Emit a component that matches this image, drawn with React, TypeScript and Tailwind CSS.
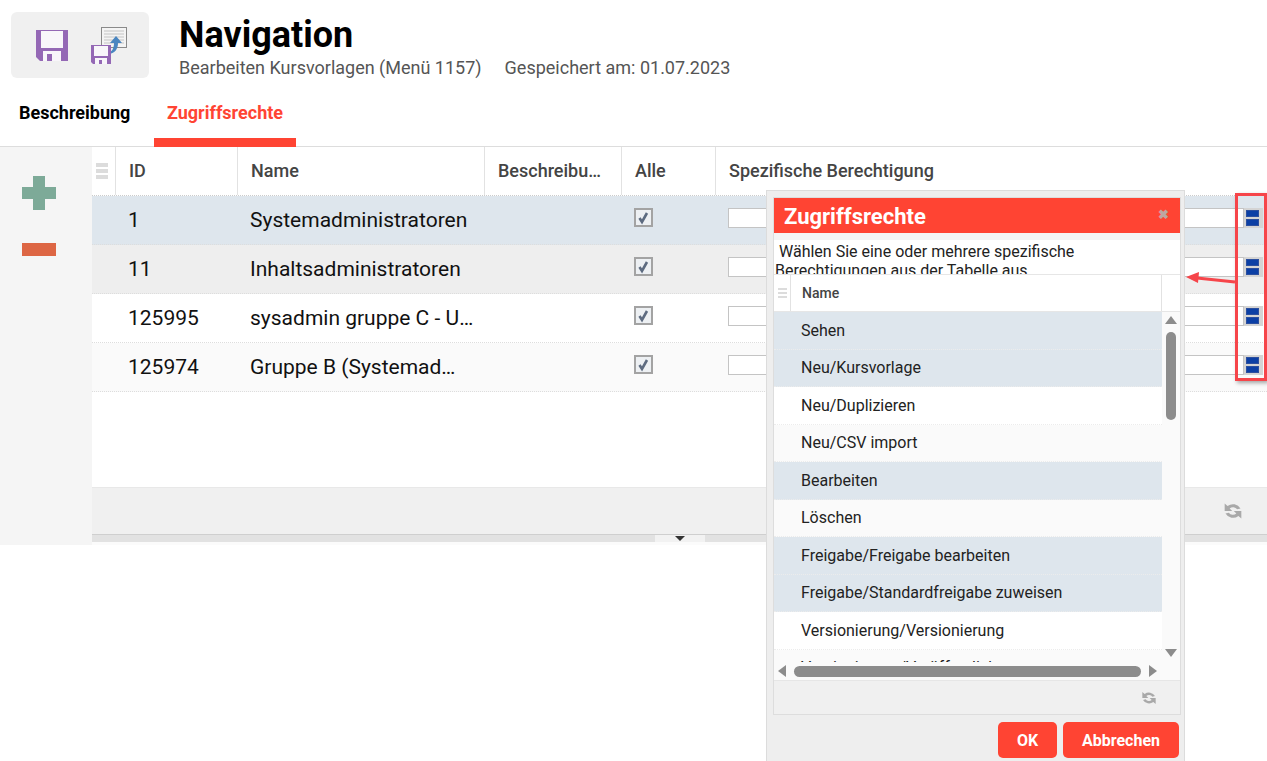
const rows = [
  { id: "1", name: "Systemadministratoren", bg: "bg-[#dee6ed]" },
  { id: "11", name: "Inhaltsadministratoren", bg: "bg-[#eeeeee]" },
  { id: "125995", name: "sysadmin gruppe C - U…", bg: "bg-white" },
  { id: "125974", name: "Gruppe B (Systemad…", bg: "bg-[#fafafa]" },
]

const rights = [
  { name: "Sehen", bg: "bg-[#dee6ed]" },
  { name: "Neu/Kursvorlage", bg: "bg-[#dee6ed]" },
  { name: "Neu/Duplizieren", bg: "bg-white" },
  { name: "Neu/CSV import", bg: "bg-[#fafafa]" },
  { name: "Bearbeiten", bg: "bg-[#dee6ed]" },
  { name: "Löschen", bg: "bg-[#fafafa]" },
  { name: "Freigabe/Freigabe bearbeiten", bg: "bg-[#dee6ed]" },
  { name: "Freigabe/Standardfreigabe zuweisen", bg: "bg-[#dee6ed]" },
  { name: "Versionierung/Versionierung", bg: "bg-white" },
  { name: "Versionierung/Veröffentlichen", bg: "bg-[#fafafa]" },
]

function Floppy({ className }: { className: string }) {
  return (
    <svg viewBox="0 0 32 31" className={className}>
      <path d="M0 0h32v31H4l-4-4z" fill="#9468b5" />
      <rect x="5" y="1" width="22" height="17" fill="#f8f6fa" />
      <path d="M7 31V21h18v10H16v-7h-5v7z" fill="#f8f6fa" />
    </svg>
  )
}

function Refresh({ className }: { className: string }) {
  return (
    <svg viewBox="0 0 24 24" fill="#a9a9a9" className={className}>
      <path d="M2 3v9h9L8 9a6 6 0 0 1 9 1l4-1A10.500 10.500 0 0 0 5.500 6z" />
      <path d="M22 21v-9h-9l3 3a6 6 0 0 1-9-1l-4 1a10.500 10.500 0 0 0 15.500 3z" />
    </svg>
  )
}

function Grip() {
  return (
    <div className="flex flex-col gap-[2px]">
      <div className="h-[4px] w-[12px] bg-[#dcdcdc]" />
      <div className="h-[4px] w-[12px] bg-[#dcdcdc]" />
      <div className="h-[4px] w-[12px] bg-[#dcdcdc]" />
    </div>
  )
}

function PickerButton() {
  return (
    <div className="flex h-[20px] w-[19px] flex-col items-start justify-center gap-[2px] bg-[#d4d4d4] pl-[2px]">
      <div className="h-[7px] w-[13px] border border-[#2c4f9e] bg-[#0b3fa5]" />
      <div className="h-[7px] w-[13px] border border-[#2c4f9e] bg-[#0b3fa5]" />
    </div>
  )
}

function Check() {
  return (
    <svg viewBox="0 0 19 19" className="h-[19px] w-[19px]">
      <rect x="1" y="1" width="17" height="17" fill="#edf0f3" stroke="#a3a3a3" strokeWidth="2" />
      <path d="M5.500 10l2.500 4 5-9" fill="none" stroke="#5d6b80" strokeWidth="2.600" />
    </svg>
  )
}

export default function App() {
  return (
    <div className="relative h-[761px] w-[1267px] overflow-hidden bg-white font-['Roboto',sans-serif]">
      {/* Header */}
      <div className="flex h-[92px] pl-[11px] pt-[12px]">
        <div className="flex h-[66px] w-[138px] items-center rounded-md bg-[#f0f0f0] pl-[25px]">
          <Floppy className="h-[31px] w-[32px]" />
          <svg viewBox="0 0 36 37" className="ml-[23px] h-[37px] w-[36px]">
            <rect x="10.500" y="0.500" width="25" height="20" fill="#f4f4f4" stroke="#8a8a8a" />
            <path d="M13 4h20M13 7h20M13 10h20M13 13h20M13 16h20" stroke="#c4c4c4" strokeWidth="1" />
            <path d="M18 25c3 0 5-4 5-9h-4l6-7 6 7h-4c0 6-3 10-9 11z" fill="#4a86c0" />
            <path d="M0 18h20v19H2l-2-2z" fill="#9468b5" />
            <rect x="3" y="19" width="14" height="10" fill="#f8f6fa" />
            <path d="M4 37v-6h12v6h-5v-4H8v4z" fill="#f8f6fa" />
          </svg>
        </div>
        <div className="ml-[30px]">
          <div className="mt-[3px] text-[36px] font-bold leading-[40px] text-black">Navigation</div>
          <div className="mt-[2px] flex text-[18px] leading-[21px] text-[#555]">
            <span>Bearbeiten Kursvorlagen (Menü 1157)</span>
            <span className="ml-[23px]">Gespeichert am: 01.07.2023</span>
          </div>
        </div>
      </div>

      {/* Tabs */}
      <div className="flex h-[55px] border-b border-[#dddddd]">
        <div className="h-[55px] w-[154px] pl-[19px] pt-[10px] text-[18px] font-bold leading-[22px] text-black">
          Beschreibung
        </div>
        <div className="h-[55px] w-[142px] border-b-[9px] border-[#ff4433] pl-[13px] pt-[10px] text-[18px] font-bold leading-[22px] text-[#ff4433]">
          Zugriffsrechte
        </div>
      </div>

      {/* Main */}
      <div className="flex h-[398px]">
        <div className="flex w-[92px] flex-col items-center bg-[#f5f5f5] pr-[14px] pt-[29px]">
          <svg viewBox="0 0 34 34" className="h-[34px] w-[34px]">
            <path d="M11 0h12v11h11v12H23v11H11V23H0V11h11z" fill="#7daa98" />
          </svg>
          <div className="mt-[33px] h-[13px] w-[34px] bg-[#dd6644]" />
        </div>
        <div className="flex flex-1 flex-col">
          <div className="flex h-[49px] border-b border-dotted border-[#cccccc] text-[18px] font-medium text-[#444]">
            <div className="flex w-[24px] items-center justify-start border-r border-[#e2e2e2] pl-[4px]"><Grip /></div>
            <div className="flex w-[122px] items-center border-r border-[#e2e2e2] pb-[1px] pl-[13px]">ID</div>
            <div className="flex w-[247px] items-center border-r border-[#e2e2e2] pb-[1px] pl-[13px]">Name</div>
            <div className="flex w-[137px] items-center border-r border-[#e2e2e2] pb-[1px] pl-[13px]">
              <span className="truncate">Beschreibu…</span>
            </div>
            <div className="flex w-[94px] items-center border-r border-[#e2e2e2] pb-[1px] pl-[13px]">Alle</div>
            <div className="flex flex-1 items-center pb-[1px] pl-[13px]">Spezifische Berechtigung</div>
          </div>
          <div className="h-[291px]">
            {rows.map((r) => (
              <div key={r.id} className={`flex h-[49px] items-center border-b border-dotted border-[#dddddd] text-[21px] text-[#111] ${r.bg}`}>
                <div className="w-[36px]" />
                <div className="w-[122px] pt-[1px]">{r.id}</div>
                <div className="w-[384px] pt-[1px]">{r.name}</div>
                <div className="w-[94px] pb-[5px]"><Check /></div>
                <div className="flex flex-1 items-center pb-[4px] pr-[4px]">
                  <div className="h-[20px] flex-1 border border-[#c4c4c4] bg-white" />
                  <PickerButton />
                </div>
              </div>
            ))}
          </div>
          <div className="flex h-[47px] items-center justify-end border-t border-[#e8e8e8] bg-[#f0f0f0] pr-[24px]">
            <Refresh className="h-[20px] w-[20px]" />
          </div>
          <div className="flex h-[8px] justify-center border-t border-[#cfcfcf] bg-[#e2e2e2]">
            <div className="flex h-[7px] w-[50px] items-center justify-center bg-[#f2f2f2]">
              <div className="h-0 w-0 border-x-[5px] border-t-[5px] border-x-transparent border-t-[#333]" />
            </div>
          </div>
          <div className="h-[3px] bg-[#fbfbfb]" />
        </div>
      </div>

      {/* Dialog */}
      <div className="absolute left-[766px] top-[190px] h-[571px] w-[419px] border-x border-t border-[#dcdcdc] bg-[#eeeeee] pl-[6px] pr-[3px] pt-[6px]">
        <div className="border border-[#dddddd]">
          <div className="flex h-[35px] items-center justify-between bg-[#ff4433] pl-[10px] pr-[11px] pt-[1px] text-[22px] font-bold text-white">
            Zugriffsrechte
            <span className="pb-[3px] text-[13px] leading-none text-[#bda6a2]">✖</span>
          </div>
          <div className="h-[7px] bg-[#f4f4f4]" />
          <div className="h-[34px] overflow-hidden bg-white pl-[1px] pt-[2px] text-[16px] leading-[19px] text-[#222]">
            <span className="pl-[4px]">Wählen Sie eine oder mehrere spezifische</span>
            <br />
            Berechtigungen aus der Tabelle aus
          </div>
          <div className="flex h-[38px] border-y border-[#e6e6e6] bg-white text-[14px] font-medium text-[#444]">
            <div className="flex w-[17px] items-center justify-center border-r border-[#e2e2e2]">
              <div className="flex flex-col gap-[2px]">
                <div className="h-[2px] w-[9px] bg-[#dcdcdc]" />
                <div className="h-[2px] w-[9px] bg-[#dcdcdc]" />
                <div className="h-[2px] w-[9px] bg-[#dcdcdc]" />
              </div>
            </div>
            <div className="flex w-[371px] items-center border-r border-[#e2e2e2] pl-[11px]">Name</div>
          </div>
          <div className="flex h-[350px] bg-[#fafafa]">
            <div className="w-[388px] overflow-hidden">
              {rights.map((r) => (
                <div key={r.name} className={`flex h-[37.500px] items-center border-b border-dotted border-[#ececec] pl-[27px] pt-[1px] text-[16px] text-[#222] ${r.bg}`}>
                  {r.name}
                </div>
              ))}
            </div>
            <div className="flex w-[18px] flex-col items-center pt-[4px]">
              <div className="h-0 w-0 border-x-[6px] border-b-[8px] border-x-transparent border-b-[#8c8c8c]" />
              <div className="mt-[8px] h-[88px] w-[10px] rounded-full bg-[#8c8c8c]" />
              <div className="mt-[229px] h-0 w-0 border-x-[6px] border-t-[8px] border-x-transparent border-t-[#8c8c8c]" />
            </div>
          </div>
          <div className="flex h-[18px] items-center bg-[#fafafa] pl-[4px]">
            <div className="h-0 w-0 border-y-[6px] border-r-[8px] border-y-transparent border-r-[#8c8c8c]" />
            <div className="ml-[8px] h-[11px] w-[347px] rounded-full bg-[#8c8c8c]" />
            <div className="ml-[8px] h-0 w-0 border-y-[6px] border-l-[8px] border-y-transparent border-l-[#8c8c8c]" />
          </div>
          <div className="flex h-[34px] items-center justify-end border-t border-[#e6e6e6] bg-[#f0f0f0] pr-[23px]">
            <Refresh className="h-[16px] w-[16px]" />
          </div>
        </div>
        <div className="mt-[7px] flex justify-end gap-[6px] pr-[2px] text-[16px] font-bold text-white">
          <button className="h-[36px] w-[59px] rounded-[5px] bg-[#ff4433] pt-[1px]">OK</button>
          <button className="h-[36px] w-[116px] rounded-[5px] bg-[#ff4433] pt-[1px]">Abbrechen</button>
        </div>
      </div>

      {/* Annotation */}
      <div className="absolute left-[1235px] top-[193px] h-[188px] w-[32px] border-[3px] border-[#f6454a] shadow-[2px_2px_4px_rgba(0,0,0,0.35)]" />
      <svg viewBox="0 0 52 14" className="absolute left-[1185px] top-[271px] h-[14px] w-[52px]">
        <path d="M50 11L12 7" stroke="#f6454a" strokeWidth="3" />
        <path d="M1 6l13-5-1 11z" fill="#f6454a" />
      </svg>
    </div>
  )
}
